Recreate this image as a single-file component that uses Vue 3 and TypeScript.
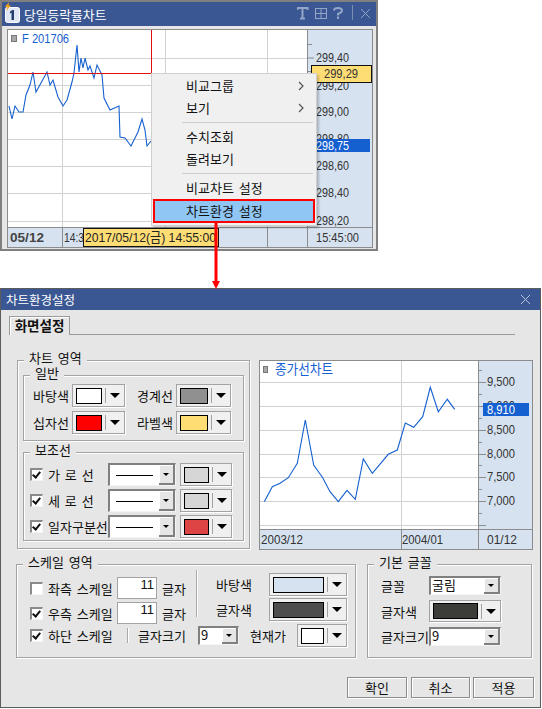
<script setup lang="ts">
const topLine = '9,106 12,119 15,106 19,112 23,112 26,95 30,85 33,72 36,92 47,72 50,85 53,80 58,97 63,106 67,100 72,82 74,73 77,45 79,72 81,58 83,68 85,58 88,70 90,66 94,78 97,65 102,75 104,98 110,110 119,106 120,137 125,138 131,146 138,132 142,119 145,130 147,146 151,141'
const bottomLine = '264.3,501.7 272.3,486.7 280,483.3 288.3,477.7 297.3,463.3 305.3,420 313.7,465 322.7,477.7 330,491.7 338.3,501.7 347,490.3 355.3,499.3 363.3,459 372.3,473.3 388.3,454.3 397.3,450 405.3,423 413.7,427.3 422.7,416.7 430.3,387.3 438.3,411.7 447.3,399.3 454.7,409.3'
const topH = [58, 85, 112, 139, 166, 193, 221]
const topV = [62, 165, 267]
const topLabels = [
  { t: '299,40', y: 62 }, { t: '299,20', y: 90 }, { t: '299,00', y: 116 }, { t: '298,80', y: 143 },
  { t: '298,60', y: 170 }, { t: '298,40', y: 197 }, { t: '298,20', y: 225 },
]
const topTicks = Array.from({ length: 14 }, (_, i) => 44.5 + i * 13.5)
const botH = [382, 406, 430, 454, 477, 501, 525]
const botLabels = [
  { t: '9,500', y: 386 }, { t: '8,500', y: 434 }, { t: '8,000', y: 458 }, { t: '7,500', y: 481 }, { t: '7,000', y: 505 },
]
const botTicks = [370, 382, 394, 406, 418, 430, 442, 454, 465, 477, 489, 501, 513, 525]
const guides = [
  { name: '가 로 선', color: '#d6d6d6' },
  { name: '세 로 선', color: '#d6d6d6' },
  { name: '일자구분선', color: '#dd4444' },
]
</script>

<template>
  <div class="stage">
    <section class="win win-top">
      <header class="title top-title">
        <svg class="app-icon" width="20" height="22" viewBox="0 0 20 22">
          <rect x="1.5" y="5.5" width="14" height="15" rx="2" fill="#dfe8f4" stroke="#fff" />
          <path d="M6 9.5 8.5 8H10V18H7.5V10.8L6 11.6Z" fill="#24406f" />
          <path d="M5 0 1 5 3.5 5 2 9 7 3.5 4.5 3.5Z" fill="#f3a316" />
        </svg>
        <span class="top-name">당일등락률차트</span>
        <div class="tools">
          <svg width="73" height="18" viewBox="0 0 73 18" fill="none" stroke="#93a6c8">
            <path d="M.5 5V3H10.5V5M5.5 3V13M3 13.5H8" stroke-width="2" />
            <rect x="18.5" y="3.5" width="11" height="10" stroke-width="1" />
            <path d="M24 3.5V13.5M18.5 8.5H29.5" stroke-width="1" />
            <path d="M37 5.5Q37 3 41 3T45 5.5Q45 7.500 41 9V10.500M41 11.500V14" stroke-width="2" />
            <path d="M55.500 0V15" stroke="#7b8fb5" stroke-width="1" />
            <path d="M64 4 73 13M73 4 64 13" stroke-width="1" />
          </svg>
        </div>
      </header>
      <div class="top-body">
        <svg class="chart top-chart" width="366" height="220" viewBox="7 29 366 220">
          <rect x="7.500" y="29.500" width="365" height="218" fill="#d6e2f0" stroke="#8c8c8c" />
          <rect x="8" y="30" width="299" height="197" fill="#fff" />
          <line v-for="y in topH" :key="y" x1="8" x2="307" :y1="y + .5" :y2="y + .5" class="grid" />
          <line v-for="x in topV" :key="x" :x1="x + .5" :x2="x + .5" y1="30" y2="227" class="grid" />
          <line x1="307.500" x2="307.500" y1="30" y2="247" class="axis" />
          <line x1="8" x2="372" y1="227.500" y2="227.500" class="axis" />
          <line x1="62.500" x2="62.500" y1="228" y2="247" class="axis" />
          <line x1="267.500" x2="267.500" y1="228" y2="247" class="axis" />
          <line v-for="y in topTicks" :key="y" x1="308" :x2="y === 58 ? 314 : 312" :y1="y" :y2="y" class="axis" />
          <rect x="11.500" y="35.500" width="5" height="6" fill="#a8a8a8" stroke="#777" />
          <text x="22" y="43" class="blue-text" textLength="47" lengthAdjust="spacingAndGlyphs">F 201706</text>
          <polyline :points="topLine" class="series" />
          <line x1="151.500" x2="151.500" y1="30" y2="74" class="cross" />
          <line x1="8" x2="152" y1="73.500" y2="73.500" class="cross" />
          <text v-for="l in topLabels" :key="l.t" x="316" :y="l.y" class="num" textLength="33" lengthAdjust="spacingAndGlyphs">{{ l.t }}</text>
          <rect x="311.500" y="65.500" width="60" height="17" fill="#ffdd75" stroke="#111" />
          <text x="324" y="78" class="num" textLength="34" lengthAdjust="spacingAndGlyphs">299,29</text>
          <rect x="312" y="139" width="58" height="13" fill="#1560d0" />
          <text x="316" y="150" class="num white" textLength="33" lengthAdjust="spacingAndGlyphs">298,75</text>
          <text x="10" y="242" class="date" textLength="34" lengthAdjust="spacingAndGlyphs">05/12</text>
          <text x="64" y="242" class="num" textLength="20" lengthAdjust="spacingAndGlyphs">14:3</text>
          <rect x="83.500" y="228.500" width="135" height="18" fill="#ffdd75" stroke="#111" />
          <text x="85" y="242" class="num ko" textLength="131" lengthAdjust="spacingAndGlyphs">2017/05/12(금) 14:55:00</text>
          <text x="316" y="242" class="num" textLength="43" lengthAdjust="spacingAndGlyphs">15:45:00</text>
        </svg>
        <nav class="menu">
          <div class="mi">비교그룹<svg class="chev" width="6" height="10" viewBox="0 0 6 10"><path d="M1 1 5 5 1 9" fill="none" stroke="#555" stroke-width="1.2" /></svg></div>
          <div class="mi">보기<svg class="chev" width="6" height="10" viewBox="0 0 6 10"><path d="M1 1 5 5 1 9" fill="none" stroke="#555" stroke-width="1.2" /></svg></div>
          <div class="msep"></div>
          <div class="mi">수치조회</div>
          <div class="mi">돌려보기</div>
          <div class="msep"></div>
          <div class="mi">비교차트 설정</div>
          <div class="mi mi-on">차트환경 설정</div>
        </nav>
      </div>
    </section>

    <svg class="link" width="10" height="68" viewBox="0 0 10 68">
      <path d="M5 0V60" stroke="#f00" stroke-width="3" />
      <path d="M1 59H9L5 67Z" fill="#f00" />
    </svg>

    <section class="win win-dlg">
      <header class="title dlg-title">
        <span>차트환경설정</span>
        <svg width="11" height="11" viewBox="0 0 11 11"><path d="M1 1 10 10M10 1 1 10" stroke="#b8c4da" stroke-width="1" /></svg>
      </header>
      <div class="tabbar"><div class="tab">화면설정</div></div>

      <div class="main">
        <div class="group area">
          <span class="legend">차트 영역</span>
          <div class="group general">
            <span class="legend">일반</span>
            <div class="gen-row">
              <label class="lb w34">바탕색</label>
              <div class="swatch s53"><i class="color" style="background:#ffffff"></i><b class="dd"></b></div>
              <label class="lb w34 ml12">경계선</label>
              <div class="swatch s55"><i class="color" style="background:#909090"></i><b class="dd"></b></div>
            </div>
            <div class="gen-row">
              <label class="lb w34">십자선</label>
              <div class="swatch s53"><i class="color" style="background:#ff0000"></i><b class="dd"></b></div>
              <label class="lb w34 ml12">라벨색</label>
              <div class="swatch s55"><i class="color" style="background:#ffdd75"></i><b class="dd"></b></div>
            </div>
          </div>
          <div class="group guide">
            <span class="legend">보조선</span>
            <div v-for="g in guides" :key="g.name" class="guide-row">
              <span class="chk on"></span>
              <label class="lb guide-name">{{ g.name }}</label>
              <div class="combo line-combo"><i class="stroke"></i><b class="cbtn"></b></div>
              <div class="swatch s52"><i class="color" :style="{ background: g.color }"></i><b class="dd"></b></div>
            </div>
          </div>
        </div>

        <svg class="chart bot-chart" width="274" height="190" viewBox="259 360 274 190">
          <rect x="259.500" y="360.500" width="273" height="189" fill="#d6e2f0" stroke="#8c8c8c" />
          <rect x="260" y="361" width="218" height="168" fill="#fff" />
          <line v-for="y in botH" :key="y" x1="260" x2="478" :y1="y + .5" :y2="y + .5" class="grid" />
          <line x1="401.500" x2="401.500" y1="361" y2="529" class="grid" />
          <line x1="478.500" x2="478.500" y1="361" y2="549" class="axis" />
          <line x1="260" x2="532" y1="529.500" y2="529.500" class="axis" />
          <line x1="401.500" x2="401.500" y1="530" y2="549" class="axis" />
          <line v-for="y in botTicks" :key="y" x1="479" :x2="(y - 382) % 24 === 0 || y === 477 || y === 501 || y === 525 ? 486 : 482" :y1="y + .5" :y2="y + .5" class="axis" />
          <rect x="263.500" y="366.500" width="4" height="6" fill="#a8a8a8" stroke="#777" />
          <text x="275" y="374" class="blue-text ko" textLength="58" lengthAdjust="spacingAndGlyphs">종가선차트</text>
          <polyline :points="bottomLine" class="series" />
          <text v-for="l in botLabels" :key="l.t" x="487" :y="l.y" class="num" textLength="28" lengthAdjust="spacingAndGlyphs">{{ l.t }}</text>
          <text x="487" y="410" class="num" textLength="28" lengthAdjust="spacingAndGlyphs">8,900</text>
          <rect x="483" y="403" width="46" height="13" fill="#1560d0" />
          <text x="487" y="414" class="num white" textLength="28" lengthAdjust="spacingAndGlyphs">8,910</text>
          <text x="261" y="544" class="num" textLength="42" lengthAdjust="spacingAndGlyphs">2003/12</text>
          <text x="402" y="544" class="num" textLength="41" lengthAdjust="spacingAndGlyphs">2004/01</text>
          <text x="487" y="544" class="num" textLength="30" lengthAdjust="spacingAndGlyphs">01/12</text>
        </svg>
      </div>

      <div class="lower">
        <div class="group scale">
          <span class="legend">스케일 영역</span>
          <div class="scale-top">
            <div class="scale-left">
              <div class="scale-row">
                <span class="chk"></span><label class="lb w69">좌측 스케일</label>
                <span class="field">11</span><label class="lb ml5">글자</label>
              </div>
              <div class="scale-row">
                <span class="chk on"></span><label class="lb w69">우측 스케일</label>
                <span class="field">11</span><label class="lb ml5">글자</label>
              </div>
            </div>
            <div class="vsep tall"></div>
            <div class="scale-right">
              <div class="scale-color">
                <label class="lb w53">바탕색</label>
                <div class="swatch s78"><i class="color" style="background:#d6e2f0"></i><b class="dd"></b></div>
              </div>
              <div class="scale-color">
                <label class="lb w53">글자색</label>
                <div class="swatch s78"><i class="color" style="background:#4d4d4d"></i><b class="dd"></b></div>
              </div>
            </div>
          </div>
          <div class="scale-bottom">
            <span class="chk on"></span><label class="lb w79">하단 스케일</label>
            <div class="vsep short"></div>
            <label class="lb sz-label">글자크기</label>
            <div class="combo sz-combo"><span class="ctext">9</span><b class="cbtn"></b></div>
            <label class="lb cur-label">현재가</label>
            <div class="swatch s50"><i class="color" style="background:#ffffff"></i><b class="dd"></b></div>
          </div>
        </div>

        <div class="group font">
          <span class="legend">기본 글꼴</span>
          <div class="font-grid">
            <label class="lb">글꼴</label>
            <div class="combo"><span class="ctext">굴림</span><b class="cbtn"></b></div>
            <label class="lb">글자색</label>
            <div class="swatch s72"><i class="color" style="background:#3c3c38"></i><b class="dd"></b></div>
            <label class="lb">글자크기</label>
            <div class="combo"><span class="ctext">9</span><b class="cbtn"></b></div>
          </div>
        </div>
      </div>

      <div class="actions">
        <button type="button">확인</button>
        <button type="button">취소</button>
        <button type="button">적용</button>
      </div>
    </section>
  </div>
</template>

<style>
html, body { margin: 0; background: #fff; }
</style>

<style scoped>
.stage {
  position: relative;
  width: 542px;
  height: 709px;
  overflow: hidden;
  background: #fff;
  font-family: "Noto Sans CJK KR", "Liberation Sans", sans-serif;
  font-size: 13px;
  word-spacing: 2px;
  color: #111;
}
.win { position: absolute; left: 0; box-sizing: border-box; background: #e6e6e6; }
.win-top { top: 0; width: 378px; height: 251px; border: 2px solid #808080; }
.win-dlg { top: 288px; width: 541px; height: 420px; border: 1px solid #5c5c5c; }
.title { display: flex; align-items: center; background: #3a5793; color: #fff; }
.top-title { height: 24px; padding-left: 2px; }
.app-icon { margin-top: -2px; }
.top-name { font-size: 12.8px; }
.tools { margin-left: auto; margin-right: 6px; display: flex; }
.top-body { padding: 3px 0 0 5px; }
.chart { display: block; word-spacing: 0; }
.grid { stroke: #d2d2d2; }
.axis { stroke: #8c8c8c; }
.cross { stroke: #e01010; }
.series { fill: none; stroke: #1560d0; stroke-width: 1.1; }
.num { font-family: "Liberation Sans", "Noto Sans CJK KR", sans-serif; font-size: 13.5px; fill: #333; }
.num.ko { fill: #222; }
.num.white { fill: #fff; }
.blue-text { font-family: "Liberation Sans", "Noto Sans CJK KR", sans-serif; font-size: 13.5px; fill: #1560d0; }
.date { font-family: "Liberation Sans", sans-serif; font-size: 13.5px; font-weight: 700; fill: #444; }
.menu {
  position: absolute;
  left: 149px;
  top: 71px;
  width: 166px;
  height: 153px;
  box-sizing: border-box;
  padding-top: 1px;
  background: #f0f0f0;
  border: 1px solid #cfcfcf;
  box-shadow: 2px 2px 2px rgba(0, 0, 0, .2);
}
.mi { position: relative; display: flex; align-items: center; box-sizing: border-box; height: 22px; padding: 0 0 2px 34px; }
.chev { position: absolute; right: 12px; top: 6px; }
.msep { height: 1px; margin: 3px 3px 3px 30px; background: #cdcdcd; }
.mi-on {
  width: 162px;
  height: 24px;
  margin-left: 1px;
  padding: 0 0 1px 31px;
  background: #90c6f4;
  border: 2px solid #f00;
}
.link { position: absolute; left: 211px; top: 222px; z-index: 2; }
.dlg-title { height: 21px; justify-content: space-between; padding: 0 9px 0 5px; font-size: 12.5px; }
.tabbar {
  box-sizing: border-box;
  width: 506px;
  height: 25px;
  margin-left: 8px;
  padding-top: 6px;
  border-bottom: 1px solid #9a9a9a;
}
.tab {
  box-sizing: border-box;
  width: 61px;
  height: 19px;
  line-height: 17px;
  text-align: center;
  font-size: 13.5px;
  font-weight: 700;
  background: #e6e6e6;
  border: 1px solid #9a9a9a;
  border-bottom: 0;
  box-shadow: inset 1px 1px 0 #fff;
}
.main { display: flex; gap: 9px; margin: 25px 0 0 16px; }
.group {
  position: relative;
  box-sizing: border-box;
  border: 1px solid #a3a3a3;
  box-shadow: 1px 1px 0 #fff, inset 1px 1px 0 #fff;
}
.legend {
  position: absolute;
  top: -10px;
  left: 6px;
  padding: 0 5px;
  line-height: 14px;
  background: #e6e6e6;
  white-space: nowrap;
}
.area { width: 233px; height: 189px; padding: 14px 0 0 5px; }
.general { width: 221px; height: 66px; padding: 8px 0 0 9px; }
.guide { width: 221px; height: 89px; margin-top: 11px; padding: 10px 0 0 6px; }
.gen-row { display: flex; align-items: center; gap: 5px; height: 23px; margin-bottom: 4px; }
.guide-row { display: flex; align-items: center; height: 23px; margin-bottom: 3px; }
.lb { white-space: nowrap; }
.w34 { width: 34px; }
.ml12 { margin-left: 7px; }
.ml5 { margin-left: 5px; }
.w53 { width: 53px; flex: none; }
.w69 { width: 69px; flex: none; margin-left: 5px; }
.w79 { width: 79px; flex: none; margin-left: 5px; }
.guide-name { width: 60px; flex: none; margin-left: 5px; }
.swatch {
  display: flex;
  align-items: center;
  box-sizing: border-box;
  height: 23px;
  padding-left: 3px;
  flex: none;
  background: #f0f0f0;
  border: 1px solid #a3a3a3;
  box-shadow: 1px 1px 0 #fff;
}
.s50 { width: 50px; margin-left: 9px; }
.s52 { width: 52px; margin-left: 4px; }
.s53 { width: 53px; }
.s55 { width: 55px; }
.s72 { width: 72px; height: 22px; }
.s78 { width: 78px; }
.color {
  flex: 1;
  box-sizing: border-box;
  height: 16px;
  border: 1px solid #000;
}
.dd {
  position: relative;
  flex: none;
  width: 19px;
  height: 15px;
  margin-left: 3px;
  border-left: 1px solid #a3a3a3;
  box-sizing: border-box;
}
.dd::after {
  content: "";
  position: absolute;
  left: 4px;
  top: 5px;
  border: 5px solid transparent;
  border-top: 5px solid #000;
  border-bottom: 0;
}
.chk {
  position: relative;
  flex: none;
  box-sizing: border-box;
  width: 13px;
  height: 13px;
  background: #fff;
  border-top: 2px solid #8a8a8a;
  border-left: 2px solid #8a8a8a;
  border-right: 1px solid #f4f4f4;
  border-bottom: 1px solid #f4f4f4;
}
.chk.on::after {
  content: "";
  position: absolute;
  left: 1.5px;
  top: 0;
  width: 3px;
  height: 6px;
  border-right: 2px solid #111;
  border-bottom: 2px solid #111;
  transform: rotate(40deg);
}
.combo {
  position: relative;
  box-sizing: border-box;
  display: flex;
  height: 19px;
  flex: none;
  background: #fff;
  border-top: 2px solid #808080;
  border-left: 2px solid #808080;
  border-right: 1px solid #f4f4f4;
  border-bottom: 1px solid #f4f4f4;
}
.line-combo { width: 68px; height: 23px; }
.sz-combo { width: 41px; margin-left: 13px; }
.ctext { line-height: 13px; padding-left: 1px; }
.stroke { width: 37px; height: 1px; margin: 10px 0 0 6px; background: #000; }
.cbtn {
  position: absolute;
  right: 0;
  top: 0;
  bottom: 0;
  box-sizing: border-box;
  width: 16px;
  background: #e6e6e6;
  border-right: 2px solid #808080;
  border-bottom: 2px solid #808080;
  box-shadow: inset 1px 1px 0 #fff;
}
.cbtn::after {
  content: "";
  position: absolute;
  left: 4px;
  top: 50%;
  margin-top: -1px;
  border: 3.5px solid transparent;
  border-top: 3.5px solid #000;
  border-bottom: 0;
}
.lower { display: flex; gap: 11px; margin: 14px 0 0 15px; }
.scale { width: 340px; height: 94px; padding: 12px 0 0 13px; }
.scale-top { display: flex; height: 47px; }
.scale-left { width: 166px; display: flex; flex-direction: column; gap: 3px; flex: none; }
.scale-row { display: flex; align-items: center; height: 22px; }
.field {
  box-sizing: border-box;
  width: 40px;
  height: 22px;
  padding-right: 2px;
  line-height: 13px;
  text-align: right;
  background: #fff;
  border: 1px solid #a3a3a3;
  font-family: "Liberation Sans", sans-serif;
  font-size: 13px;
  flex: none;
}
.vsep { width: 1px; background: #a9a9a9; box-shadow: 1px 0 0 #fff; flex: none; }
.tall { height: 47px; margin-top: -7px; }
.short { height: 15px; }
.scale-right {
  display: flex;
  flex-direction: column;
  gap: 2px;
  margin: -4px 0 0 19px;
}
.scale-color { display: flex; align-items: center; }
.scale-bottom { display: flex; align-items: center; height: 23px; }
.sz-label { margin-left: 10px; width: 47px; }
.cur-label { margin-left: 11px; width: 38px; }
.font { width: 165px; height: 94px; padding: 11px 0 0 13px; }
.font-grid {
  display: grid;
  grid-template-columns: 48px 72px;
  grid-template-rows: 19px 22px 19px;
  row-gap: 5px;
  align-items: center;
}
.actions { display: flex; justify-content: flex-end; gap: 3px; margin: 19px 6px 0 0; }
button {
  box-sizing: border-box;
  width: 60px;
  height: 21px;
  padding: 0;
  font: inherit;
  line-height: 17px;
  color: #111;
  background: #e6e6e6;
  border: 1px solid #8c8c8c;
  box-shadow: inset 1px 1px 0 #fff, 1px 1px 0 #fff;
}
button:nth-child(1) { margin-right: 1px; }
button:nth-child(2) { width: 59px; }
button:nth-child(3) { width: 61px; }
</style>
